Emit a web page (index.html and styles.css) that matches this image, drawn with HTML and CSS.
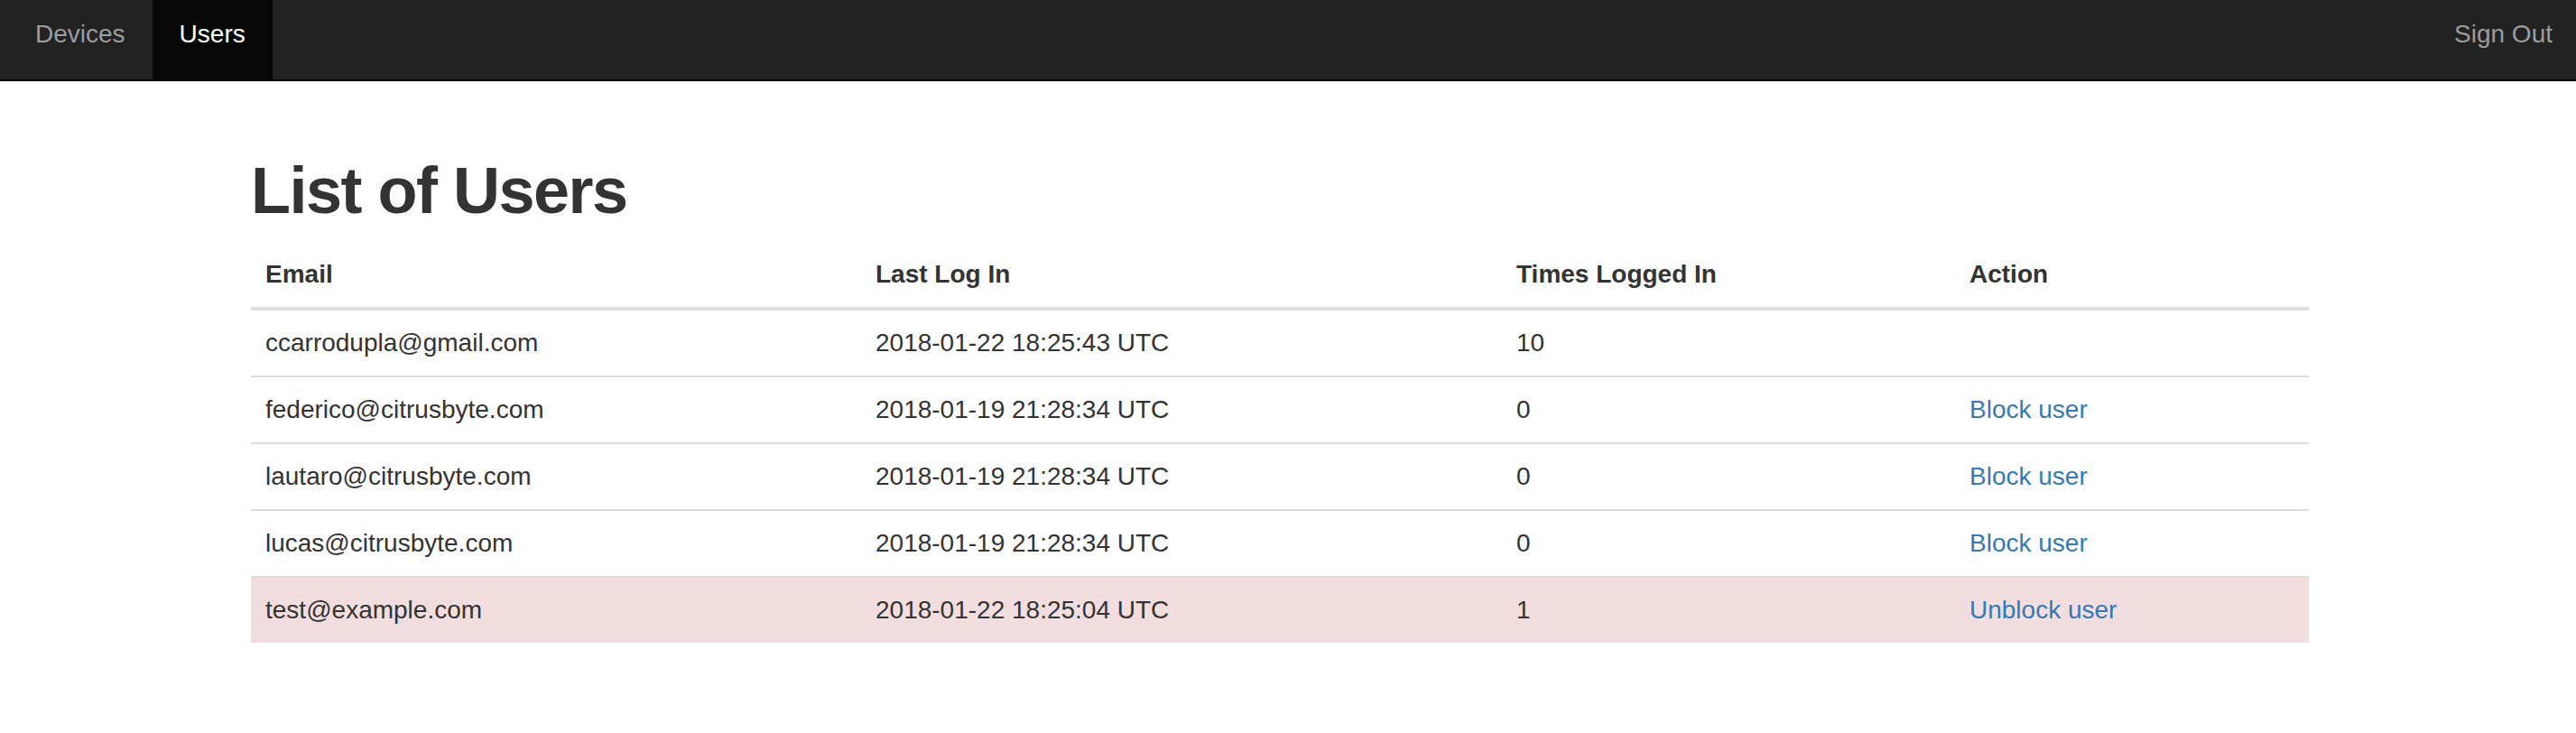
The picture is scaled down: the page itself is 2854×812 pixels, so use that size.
FILE: index.html
```html
<!DOCTYPE html>
<html>
<head>
<meta charset="utf-8">
<title>List of Users</title>
<link rel="stylesheet" href="styles.css">
</head>
<body>
<nav class="navbar">
  <ul class="nav">
    <li><a href="#">Devices</a></li>
    <li class="active"><a href="#">Users</a></li>
  </ul>
  <ul class="nav nav-right">
    <li><a href="#">Sign Out</a></li>
  </ul>
</nav>
<main class="container">
  <h1>List of Users</h1>
  <table class="table">
    <colgroup>
      <col class="c-email">
      <col class="c-last">
      <col class="c-times">
      <col class="c-action">
    </colgroup>
    <thead>
      <tr><th>Email</th><th>Last Log In</th><th>Times Logged In</th><th>Action</th></tr>
    </thead>
    <tbody>
      <tr><td>ccarrodupla@gmail.com</td><td>2018-01-22 18:25:43 UTC</td><td>10</td><td></td></tr>
      <tr><td>federico@citrusbyte.com</td><td>2018-01-19 21:28:34 UTC</td><td>0</td><td><a href="#">Block user</a></td></tr>
      <tr><td>lautaro@citrusbyte.com</td><td>2018-01-19 21:28:34 UTC</td><td>0</td><td><a href="#">Block user</a></td></tr>
      <tr><td>lucas@citrusbyte.com</td><td>2018-01-19 21:28:34 UTC</td><td>0</td><td><a href="#">Block user</a></td></tr>
      <tr class="danger"><td>test@example.com</td><td>2018-01-22 18:25:04 UTC</td><td>1</td><td><a href="#">Unblock user</a></td></tr>
    </tbody>
  </table>
</main>
</body>
</html>
```

FILE: styles.css
```css
* { box-sizing: border-box; }

html, body {
  margin: 0;
  padding: 0;
  background: #fff;
}

body {
  font-family: "Liberation Sans", Arial, Helvetica, sans-serif;
  font-size: 28px;
  line-height: 40px;
  color: #333;
}

a {
  color: #337ab7;
  text-decoration: none;
}

.navbar {
  display: flex;
  justify-content: space-between;
  background: #222;
  height: 90px;
  border-bottom: 2px solid #080808;
  padding-left: 9px;
}

.nav {
  display: flex;
  list-style: none;
  margin: 0;
  padding: 0;
}

.nav li a {
  display: block;
  height: 88px;
  padding: 18px 30px 30px 30px;
  color: #9d9d9d;
}

.nav li.active a {
  color: #fff;
  background: #080808;
}

.nav-right li a {
  padding-right: 26px;
}

.container {
  width: 2280px;
  margin-left: 278px;
  padding-top: 82px;
}

h1 {
  margin: 0;
  font-size: 72px;
  font-weight: bold;
  letter-spacing: -1.5px;
  line-height: 1.1;
  color: #333;
}

.table {
  width: 100%;
  margin-top: 17px;
  border-collapse: collapse;
  table-layout: fixed;
}

.c-email { width: 676px; }
.c-last { width: 710px; }
.c-times { width: 502px; }
.c-action { width: 392px; }

.table th,
.table td {
  padding: 16px;
  text-align: left;
  vertical-align: top;
  line-height: 40px;
}

.table th {
  font-weight: bold;
  border-bottom: 4px solid #ddd;
}

.table td {
  border-top: 2px solid #ddd;
}

.table tr.danger td {
  background: #f2dede;
}
```
